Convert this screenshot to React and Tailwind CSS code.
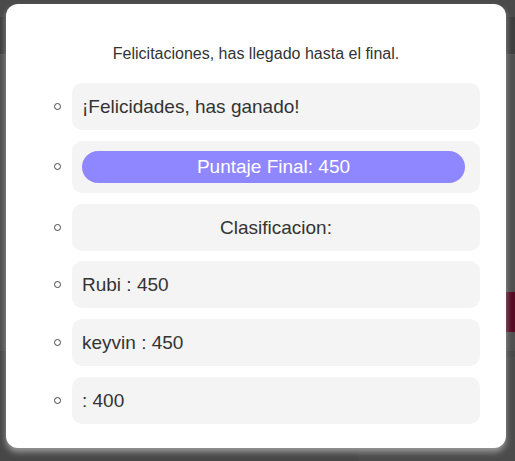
export default function App() {
  const items = [
    { id: 1, text: '¡Felicidades, has ganado!' },
    { id: 2, text: 'Puntaje Final: 450', pill: true },
    { id: 3, text: 'Clasificacion:', center: true },
    { id: 4, text: 'Rubi : 450' },
    { id: 5, text: 'keyvin : 450' },
    { id: 6, text: ' : 400' },
  ];

  return (
    <div className="relative w-[515px] h-[461px] overflow-hidden bg-[#4c4c4c] font-['Liberation_Sans',Arial,sans-serif]">
      {/* page behind the overlay */}
      <div className="flex flex-col">
        <div className="h-[17px] bg-[#4a4a4a]" />
        <div className="h-[38px] bg-[#3e3e3e] border-b border-[#555]" />
        <div className="h-[237px] bg-[#4f4f4f]" />
        <div className="h-[40px] bg-[#4f4f4f] flex justify-end">
          <div className="w-[9px] bg-[#560a24]" />
        </div>
        <div className="h-[19px] bg-[#4f4f4f]" />
        <div className="h-[6px] bg-[#474747]" />
        <div className="flex h-[104px]">
          <div className="w-[358px] bg-[#474747]" />
          <div className="flex-1 bg-[#4b4b4b]" />
        </div>
      </div>

      {/* modal */}
      <div className="absolute left-[6px] top-[4px] w-[500px] h-[444px] bg-white rounded-[12px] shadow-[0_4px_6px_rgba(190,190,190,0.7)] px-[26px] pt-[41px]">
        <p className="text-center text-[16px] leading-[18px] text-[#333]">
          Felicitaciones, has llegado hasta el final.
        </p>
        <ul className="mt-[20px] flex flex-col gap-[10.8px]">
          {items.map(item => (
            <li key={item.id} className="flex items-center">
              <span className="w-[40px] flex justify-start pl-[22px]">
                <span className="block w-[7px] h-[7px] rounded-full border border-[#444]" />
              </span>
              <div className="w-[408px] bg-[#f4f4f4] rounded-[10px] p-[10px] text-[19px] leading-[27px] text-[#333]">
                {item.pill ? (
                  <div className="h-[32px] mr-[5px] rounded-full bg-[#8f87ff] text-white flex items-center justify-center">
                    {item.text}
                  </div>
                ) : (
                  <div className={item.center ? 'text-center' : ''}>{item.text}</div>
                )}
              </div>
            </li>
          ))}
        </ul>
      </div>
    </div>
  );
}
